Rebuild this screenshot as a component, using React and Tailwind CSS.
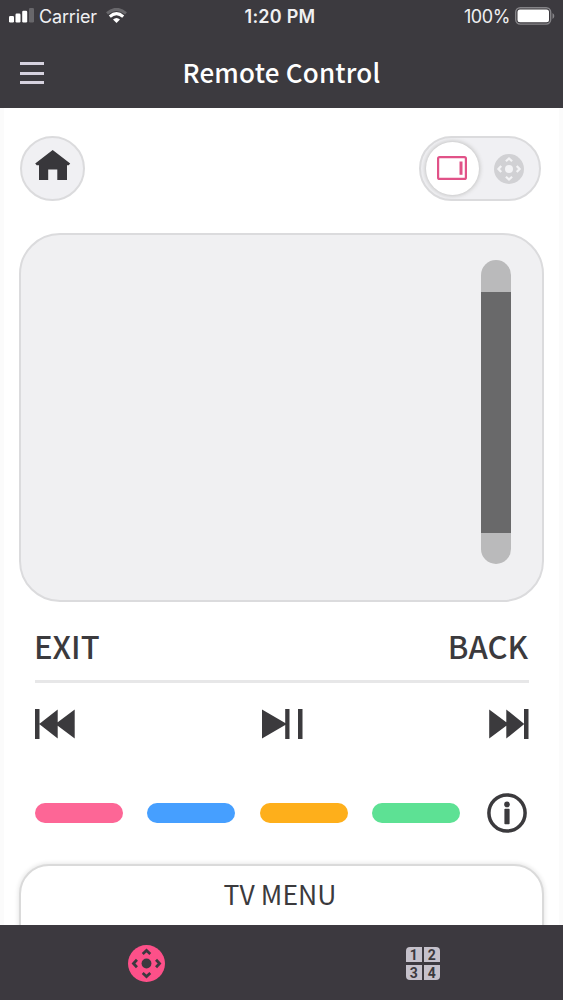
import React from "react";

const cjk = "font-['Noto_Sans_CJK_KR','Noto_Sans_CJK_JP',sans-serif]";

function StatusBar() {
  return (
    <div className="grid h-8 grid-cols-3 items-center pr-2 pl-2 font-['Inter',sans-serif] text-[18px] text-[#f0f0f2]">
      <div className="flex items-center">
        <svg width="27" height="16" viewBox="0 0 27 16" fill="#fff">
          <rect x="1" y="8" width="5" height="6.5" rx="1.2" />
          <rect x="7.5" y="5.6" width="5" height="8.9" rx="1.2" />
          <rect x="14.2" y="2.8" width="5" height="11.7" rx="1.2" />
          <rect x="21" y="0" width="5" height="14.5" rx="1.2" fill="#68676b" />
        </svg>
        <span className="ml-1 tracking-[-0.15px]">Carrier</span>
        <svg className="ml-[9px]" width="21" height="16" viewBox="0 0 21 16" fill="none">
          <path d="M1 5.3Q10.5 -2.6 20 5.3" stroke="#68676b" strokeWidth="3" />
          <path d="M3.8 8.6Q10.5 2.6 17.2 8.6" stroke="#fff" strokeWidth="3" />
          <path d="M7 11.6Q10.5 8.6 14 11.6L10.5 15Z" fill="#fff" />
        </svg>
      </div>
      <span className="-ml-[3px] text-center font-semibold tracking-[0.25px] whitespace-nowrap">1:20 PM</span>
      <div className="flex items-center justify-end">
        <span className="tracking-[-0.4px]">100%</span>
        <svg className="ml-[5px]" width="40" height="18" viewBox="0 0 40 18">
          <rect x="0.7" y="0.7" width="35" height="16.4" rx="4.5" fill="none" stroke="#858488" strokeWidth="1.4" />
          <rect x="2.5" y="2.5" width="31.5" height="12.8" rx="2.5" fill="#fff" />
          <path d="M37.5 6V12Q39.3 11 39.3 9T37.5 6Z" fill="#858488" />
        </svg>
      </div>
    </div>
  );
}

function DPad({ size, disc, mark }) {
  return (
    <svg width={size} height={size} viewBox="0 0 36 36" fill="none">
      <circle cx="18" cy="18" r="18" fill={disc} />
      <circle cx="18" cy="18" r="4.8" fill={mark} />
      <g stroke={mark} strokeWidth="2.7">
        <path d="M14.3 8.7L18 5.3L21.7 8.7" />
        <path d="M14.3 27.3L18 30.7L21.7 27.3" />
        <path d="M8.7 14.3L5.3 18L8.7 21.7" />
        <path d="M27.3 14.3L30.7 18L27.3 21.7" />
      </g>
    </svg>
  );
}

function NumberKey({ value, corner }) {
  return (
    <span className={`flex h-[15.5px] w-[15.5px] items-center justify-center bg-[#c5c1cb] font-['Roboto',sans-serif] text-[14px] leading-none font-bold text-[#3b393e] ${corner}`}>
      {value}
    </span>
  );
}

export default function App() {
  return (
    <div className="flex h-[1000px] w-[563px] flex-col overflow-hidden bg-white text-[#3b3a3d]">
      <header className="h-[108px] shrink-0 bg-[#3c3a3f]">
        <StatusBar />
        <div className="grid h-[76px] grid-cols-[80px_1fr_80px] items-center">
          <button className="mt-[6px] ml-5 flex h-[22px] w-6 flex-col justify-between" aria-label="Menu">
            <span className="h-[3px] w-full bg-[#d6d2df]" />
            <span className="h-[3px] w-full bg-[#d6d2df]" />
            <span className="h-[3px] w-full bg-[#d6d2df]" />
          </button>
          <h1 className={`${cjk} pt-1 text-center text-[26px] leading-[38px] font-medium tracking-[0.2px] whitespace-nowrap text-white`}>Remote Control</h1>
        </div>
      </header>

      <main className="flex min-h-0 flex-1 flex-col border-x-4 border-[#fbfbfb] px-[15px] pt-7">
        <div className="flex h-[65px] shrink-0 items-center justify-between pr-[3px] pl-px">
          <button className="flex h-[65px] w-[65px] items-center justify-center rounded-full border-2 border-[#dbdbdd] bg-[#f0f0f3]" aria-label="Home">
            <svg className="-mt-[6px]" width="36" height="31" viewBox="0 0 36 31" fill="#38373b">
              <path d="M17.7 0L35.2 13.6L33.7 15.2H32V30H22.3V19.5H13.2V30H4V15.2H1.7L.2 13.6Z" />
            </svg>
          </button>
          <div className="flex h-[65px] w-[122px] items-center justify-between rounded-full border-2 border-[#dbdbdd] bg-[#f0f0f3] pr-[15px] pl-[5px]">
            <span className="flex h-[53px] w-[53px] items-center justify-center rounded-full bg-white pr-px pb-px shadow-[0_0_4px_1px_#c4c4c4]">
              <svg width="30" height="24" viewBox="0 0 30 24" fill="none" stroke="#e15288">
                <rect x="1.1" y="1.1" width="27.8" height="21.8" rx="1.5" strokeWidth="2.2" />
                <path d="M24 5.5V18.8" strokeWidth="3" />
              </svg>
            </span>
            <DPad size={30} disc="#d1d1d4" mark="#f3f3f5" />
          </div>
        </div>

        <section className="mt-8 flex h-[369px] shrink-0 justify-end rounded-[41px] border-2 border-[#dbdbdd] bg-[#f0f0f2] pt-[25px] pr-[31px]">
          <div className="flex h-[304px] w-[30px] flex-col overflow-hidden rounded-full">
            <span className="h-8 bg-[#bababb]" />
            <span className="flex-1 bg-[#69696a]" />
            <span className="h-[31px] bg-[#bababb]" />
          </div>
        </section>

        <section className="flex shrink-0 flex-col pr-[15px] pl-4">
          <div className={`${cjk} -mx-px flex h-[78px] items-center justify-between pt-[9px] pr-[2px] text-[31px] leading-[44px] font-medium`}>
            <button>EXIT</button>
            <button>BACK</button>
          </div>
          <div className="h-[3px] bg-[#e7e7e8]" />
          <div className="mt-[26px] flex h-[30px] items-center justify-between">
            <svg width="40" height="30" viewBox="0 0 40 30" fill="#3b3a3d">
              <path d="M0 0H4.5V30H0ZM4.2 15L22.7 .5V13.3L39.7 .5V29.5L22.7 16.7V29.5Z" />
            </svg>
            <svg width="41" height="30" viewBox="0 0 41 30" fill="#3b3a3d">
              <path d="M0 .5L23.2 14V0H27.5V30H23.2V16L0 29.5ZM36 0H40.5V30H36Z" />
            </svg>
            <svg width="40" height="30" viewBox="0 0 40 30" fill="#3b3a3d">
              <path d="M39.5 0H35V30H39.5ZM35.3 15L17.3 .5V13.3L.2 .5V29.5L17.3 16.7V29.5Z" />
            </svg>
          </div>
          <div className="mt-[54px] flex h-10 items-center justify-between pr-[2px]">
            <div className="-ml-[0.5px] flex gap-[24.6px]">
              <span className="h-5 w-[88px] rounded-full bg-[#fd6696]" />
              <span className="h-5 w-[88px] rounded-full bg-[#469fff]" />
              <span className="h-5 w-[88px] rounded-full bg-[#feaf1b]" />
              <span className="h-5 w-[88px] rounded-full bg-[#5de194]" />
            </div>
            <svg width="40" height="40" viewBox="0 0 40 40" fill="#3b3a3d">
              <circle cx="20" cy="20" r="18.1" fill="none" stroke="#3b3a3d" strokeWidth="3.5" />
              <circle cx="20" cy="11.4" r="2.8" />
              <rect x="17.4" y="15.8" width="5.2" height="15.4" rx="0.8" />
            </svg>
          </div>
        </section>

        <button className={`${cjk} mt-[31px] h-[90px] shrink-0 rounded-t-[30px] border-2 border-[#dadada] bg-white pr-[3px] pb-[30px] text-[26.5px] leading-[38px] tracking-[0.1px] shadow-[0_0_4px_1px_#e8e8e8]`}>TV MENU</button>
      </main>

      <footer className="flex h-[75px] shrink-0 items-center bg-[#3c393f] pt-[2px]">
        <button className="ml-32" aria-label="Directional pad"><DPad size={37} disc="#fd5089" mark="#3c393f" /></button>
        <button className="ml-[241px] grid grid-cols-2 gap-[2.5px]" aria-label="Number keys">
          <NumberKey value="1" corner="rounded-tl-[4px]" />
          <NumberKey value="2" corner="rounded-tr-[4px]" />
          <NumberKey value="3" corner="rounded-bl-[4px]" />
          <NumberKey value="4" corner="rounded-br-[4px]" />
        </button>
      </footer>
    </div>
  );
}
